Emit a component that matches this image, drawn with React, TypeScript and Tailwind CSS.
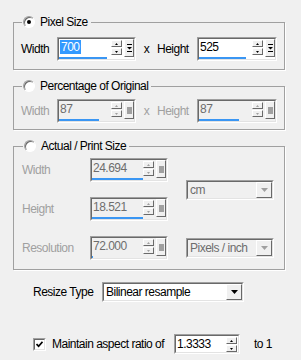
import React from "react";

const sunkenOuter = "border border-t-[#a0a0a0] border-l-[#a0a0a0] border-r-white border-b-white";
const sunkenInner = "border border-t-[#696969] border-l-[#696969] border-r-[#e3e3e3] border-b-[#e3e3e3]";
const raised = "border border-t-white border-l-white border-r-[#696969] border-b-[#696969] bg-[#f0f0f0]";

function Tri({ up = false, color = "#000", w = 5, h = 3 }: { up?: boolean; color?: string; w?: number; h?: number }) {
  return (
    <svg width={w} height={h} viewBox={`0 0 ${w} ${h}`}>
      <path d={up ? `M${w / 2} 0L${w} ${h}H0Z` : `M0 0H${w}L${w / 2} ${h}Z`} fill={color} />
    </svg>
  );
}

function Radio({ on = false }: { on?: boolean }) {
  return (
    <span className="flex h-[12px] w-[12px] items-center justify-center rounded-full border border-t-[#a0a0a0] border-l-[#a0a0a0] border-r-white border-b-white bg-white shadow-[inset_1px_1px_0_#696969]">
      {on && <span className="h-[4px] w-[4px] rounded-full bg-black" />}
    </span>
  );
}

function SpinBox({
  value, w, h = "h-[24px]", off = false, sel = false, bar, extra = true,
}: { value: string; w: string; h?: string; off?: boolean; sel?: boolean; bar?: number; extra?: boolean }) {
  const arrow = off ? "#a0a0a0" : "#000";
  return (
    <div className={`${w} ${h} flex ${sunkenOuter}`}>
      <div className={`flex flex-1 flex-col ${sunkenInner} ${off ? "bg-[#f0f0f0]" : "bg-white"}`}>
        <div className="flex flex-1 items-start">
          <div className="flex-1 pl-[1px] pt-[1px] leading-[14px]">
            <span className={sel ? "bg-[#3399ff] px-[1px] text-white" : off ? "text-[#6d6d6d]" : "text-black"}>{value}</span>
          </div>
          <div className={`flex flex-col gap-[1px] pt-[1px] ${extra ? "" : "pr-[1px]"}`}>
            <div className={`flex h-[7px] w-[11px] items-center justify-center ${raised}`}>
              <Tri up color={arrow} w={3} h={2} />
            </div>
            <div className={`flex h-[7px] w-[11px] items-center justify-center ${raised}`}>
              <Tri color={arrow} w={3} h={2} />
            </div>
          </div>
          {extra && (
            <div className={`ml-[2px] flex h-[18px] w-[10px] items-center justify-center ${raised}`}>
              {off ? (
                <span className="h-[7px] w-[5px] bg-[#a0a0a0]" />
              ) : (
                <svg width="5" height="9" viewBox="0 0 5 9">
                  <rect x="0" y="0" width="5" height="1" fill="#000" />
                  <path d="M0 3H5L2.5 5.5Z" fill="#000" />
                  <rect x="0" y="7" width="5" height="1" fill="#000" />
                </svg>
              )}
            </div>
          )}
        </div>
        {bar !== undefined && (
          <div className="h-[2px]">
            <div className="h-[2px] bg-[#3a96f3]" style={{ width: bar }} />
          </div>
        )}
      </div>
    </div>
  );
}

function Drop({ text, w, off = false }: { text: string; w: string; off?: boolean }) {
  return (
    <div className={`${w} flex h-[20px] ${sunkenOuter}`}>
      <div className={`flex flex-1 items-center ${sunkenInner} ${off ? "bg-[#f0f0f0]" : "bg-white"}`}>
        <span className={`flex-1 pl-[2px] leading-[14px] ${off ? "text-[#6d6d6d]" : "text-black"}`}>{text}</span>
        <div className={`flex h-full w-[16px] items-center justify-center ${raised}`}>
          <Tri color={off ? "#a0a0a0" : "#000"} w={7} h={4} />
        </div>
      </div>
    </div>
  );
}

function Legend({ on = false, label }: { on?: boolean; label: string }) {
  return (
    <legend className="ml-[1px] flex items-center gap-[5px] bg-[#f0f0f0] pl-[1px] pr-[3px] leading-[14px]">
      <Radio on={on} />
      <span>{label}</span>
    </legend>
  );
}

export default function App() {
  const grey = "text-[#a0a0a0]";
  return (
    <div className="relative h-[360px] w-[301px] overflow-hidden bg-[#f0f0f0] px-[13px] pt-[15px] font-['Liberation_Sans',Arial,sans-serif] text-[12px] tracking-[-0.5px] text-black">
      <fieldset className="w-[272px] border border-[#a0a0a0] pb-[8px] pl-[7px] shadow-[1px_1px_0_#fff]">
        <Legend on label="Pixel Size" />
        <div className="mt-[8px] flex items-center">
          <span className="w-[36px]">Width</span>
          <SpinBox value="700" w="w-[79px]" sel bar={48} />
          <span className="w-[21px] text-center">x</span>
          <span className="w-[40px]">Height</span>
          <SpinBox value="525" w="w-[80px]" bar={47} />
        </div>
      </fieldset>

      <fieldset className="mt-[9px] w-[272px] border border-[#a0a0a0] pb-[6px] pl-[7px] shadow-[1px_1px_0_#fff]">
        <Legend label="Percentage of Original" />
        <div className="mt-[6px] flex items-center">
          <span className={`w-[36px] ${grey}`}>Width</span>
          <SpinBox value="87" w="w-[79px]" off bar={40} />
          <span className={`w-[21px] text-center ${grey}`}>x</span>
          <span className={`w-[40px] ${grey}`}>Height</span>
          <SpinBox value="87" w="w-[80px]" off bar={40} />
        </div>
      </fieldset>

      <fieldset className="mt-[9px] w-[272px] border border-[#a0a0a0] pb-[9px] pl-[8px] shadow-[1px_1px_0_#fff]">
        <Legend label="Actual / Print Size" />
        <div className="mt-[5px] grid grid-cols-[68px_78px_106px] grid-rows-[24px_24px_24px] items-center gap-y-[15px]">
          <span className={`col-start-1 row-start-1 ${grey}`}>Width</span>
          <div className="col-start-2 row-start-1">
            <SpinBox value="24.694" w="w-[78px]" off bar={51} />
          </div>
          <div className="col-start-3 row-span-2 row-start-1 self-center pl-[18px]">
            <Drop text="cm" w="w-[88px]" off />
          </div>
          <span className={`col-start-1 row-start-2 ${grey}`}>Height</span>
          <div className="col-start-2 row-start-2">
            <SpinBox value="18.521" w="w-[78px]" off bar={51} />
          </div>
          <span className={`col-start-1 row-start-3 ${grey}`}>Resolution</span>
          <div className="col-start-2 row-start-3">
            <SpinBox value="72.000" w="w-[78px]" off bar={1} />
          </div>
          <div className="col-start-3 row-start-3 pl-[18px]">
            <Drop text="Pixels / inch" w="w-[88px]" off />
          </div>
        </div>
      </fieldset>

      <div className="mt-[12px] ml-[20px] flex items-center">
        <span className="w-[69px]">Resize Type</span>
        <Drop text="Bilinear resample" w="w-[142px]" />
      </div>

      <div className="mt-[32px] ml-[20px] flex items-center">
        <div className={`flex h-[13px] w-[13px] ${sunkenOuter}`}>
          <div className={`flex flex-1 items-center justify-center bg-white ${sunkenInner}`}>
            <svg width="7" height="7" viewBox="0 0 7 7">
              <path d="M0.5 3L2.6 5.2L6.5 0.8" fill="none" stroke="#000" strokeWidth="1.7" />
            </svg>
          </div>
        </div>
        <span className="ml-[6px] w-[122px]">Maintain aspect ratio of</span>
        <SpinBox value="1.3333" w="w-[66px]" h="h-[20px]" extra={false} />
        <span className="ml-[14px]">to 1</span>
      </div>
    </div>
  );
}
